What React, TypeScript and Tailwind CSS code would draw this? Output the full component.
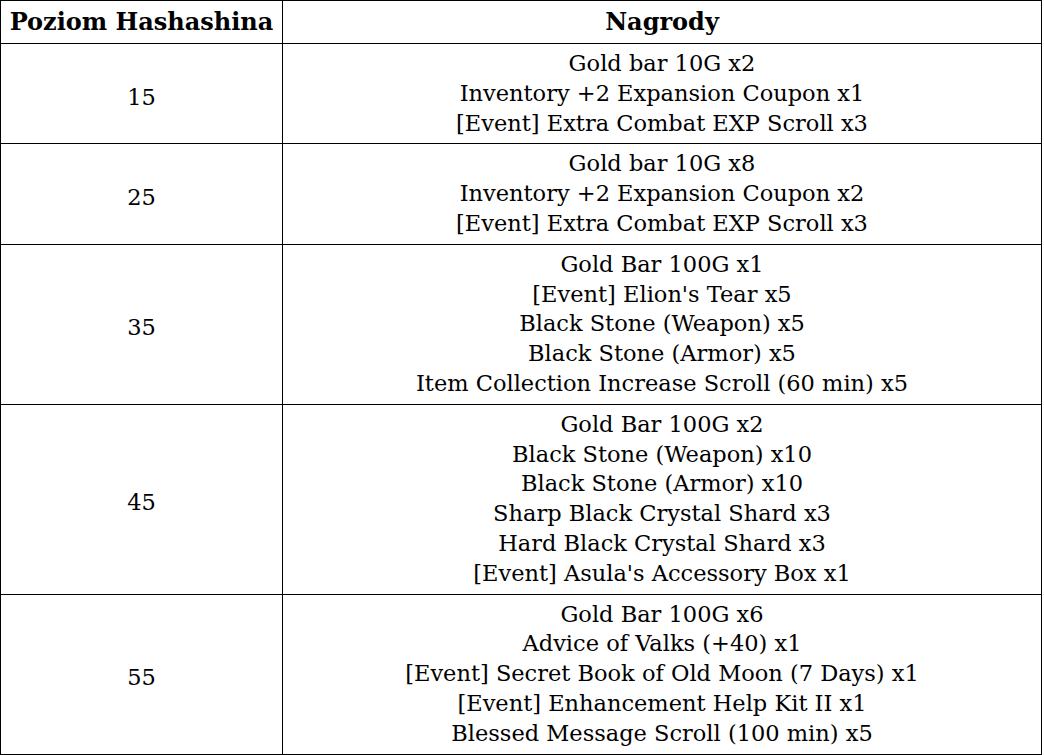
const rows = [
  {
    level: '15',
    rewards: ['Gold bar 10G x2', 'Inventory +2 Expansion Coupon x1', '[Event] Extra Combat EXP Scroll x3'],
  },
  {
    level: '25',
    rewards: ['Gold bar 10G x8', 'Inventory +2 Expansion Coupon x2', '[Event] Extra Combat EXP Scroll x3'],
  },
  {
    level: '35',
    rewards: [
      'Gold Bar 100G x1',
      "[Event] Elion's Tear x5",
      'Black Stone (Weapon) x5',
      'Black Stone (Armor) x5',
      'Item Collection Increase Scroll (60 min) x5',
    ],
  },
  {
    level: '45',
    rewards: [
      'Gold Bar 100G x2',
      'Black Stone (Weapon) x10',
      'Black Stone (Armor) x10',
      'Sharp Black Crystal Shard x3',
      'Hard Black Crystal Shard x3',
      "[Event] Asula's Accessory Box x1",
    ],
  },
  {
    level: '55',
    rewards: [
      'Gold Bar 100G x6',
      'Advice of Valks (+40) x1',
      '[Event] Secret Book of Old Moon (7 Days) x1',
      '[Event] Enhancement Help Kit II x1',
      'Blessed Message Scroll (100 min) x5',
    ],
  },
]

export default function App() {
  return (
    <div className="bg-white w-[1044px] h-[755px] overflow-hidden">
      <table className="w-[1042px] border-collapse text-black text-[22.5px] font-['DejaVu_Serif',Georgia,serif]">
        <thead>
          <tr>
            <th className="w-[282px] border border-black py-[6px] text-[24px] leading-[30px] font-bold">Poziom Hashashina</th>
            <th className="border border-black py-[6px] text-[24px] leading-[30px] font-bold">Nagrody</th>
          </tr>
        </thead>
        <tbody>
          {rows.map((row) => (
            <tr key={row.level}>
              <td className="border border-black text-center align-middle pt-[8px] font-normal">{row.level}</td>
              <td className="border border-black text-center py-[5px] leading-[29.8px]">
                {row.rewards.map((r) => (
                  <div key={r}>{r}</div>
                ))}
              </td>
            </tr>
          ))}
        </tbody>
      </table>
    </div>
  )
}
